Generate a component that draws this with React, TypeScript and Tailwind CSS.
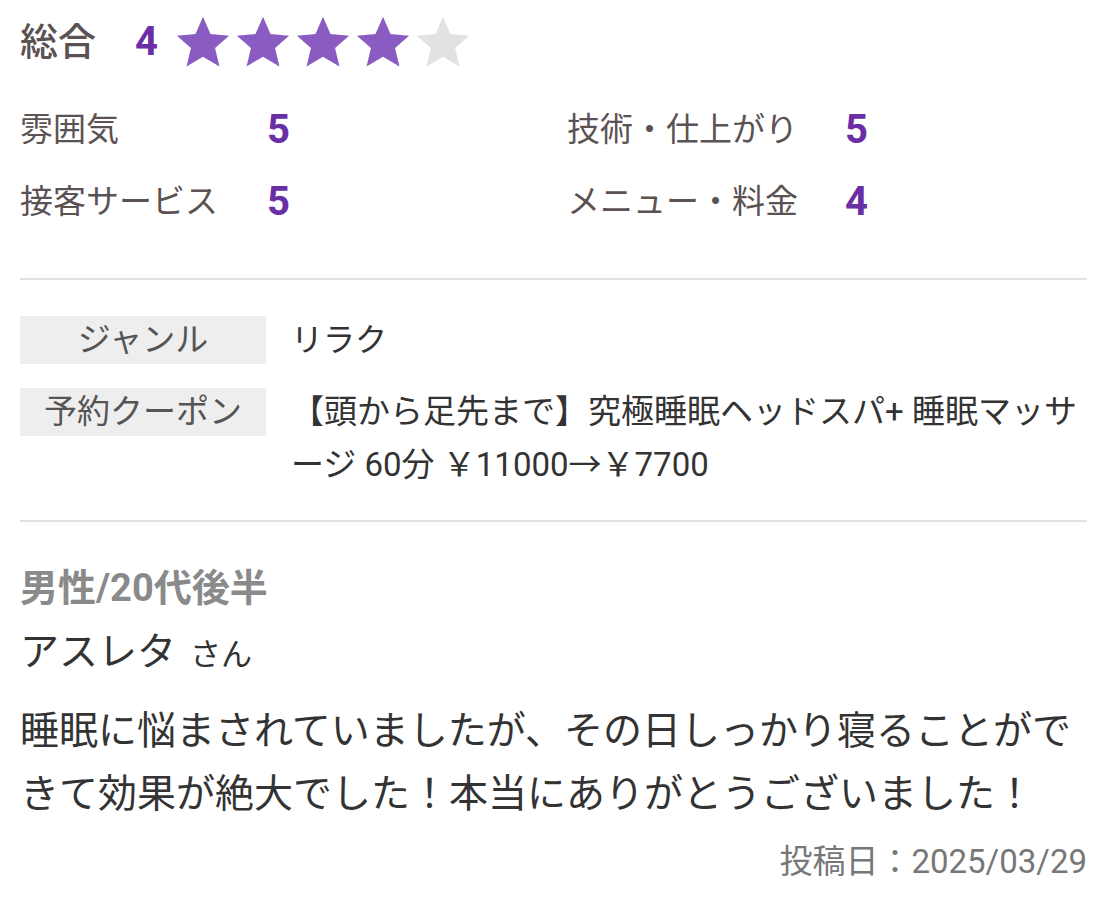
// Salon review card

const FONT = "font-['Roboto','Noto_Sans_CJK_JP',sans-serif]";

function Star({ filled }: { filled: boolean }) {
  return (
    <svg viewBox="0 0 24 24" className="h-[58px] w-[58px]" aria-hidden>
      <path
        d="M12 1.6l3.1 7.1 7.7.7-5.8 5.1 1.8 7.6L12 18.1l-6.8 4 1.8-7.6-5.8-5.1 7.7-.7z"
        fill={filled ? '#8a5cc2' : '#e2e2e4'}
      />
    </svg>
  );
}

function Score({ label, value, labelWidth }: { label: string; value: number; labelWidth: string }) {
  return (
    <div className="flex h-[72px] items-center">
      <div className={`${labelWidth} text-[33px] text-[#5b5253]`}>{label}</div>
      <div className="text-[40px] font-bold text-[#6a2fa6]">{value}</div>
    </div>
  );
}

export default function App() {
  const total = 4;
  return (
    <div className={`${FONT} w-[1119px] bg-white pl-[20px] pr-[32px] pt-[10px] pb-[20px]`}>
      {/* overall */}
      <div className="flex h-[64px] items-center">
        <span className="w-[115px] text-[38px] font-medium text-[#5b5253]">総合</span>
        <span className="mr-[16px] text-[40px] font-bold text-[#6a2fa6]">{total}</span>
        <div className="flex gap-[2px]">
          {[1, 2, 3, 4, 5].map((i) => (
            <Star key={i} filled={i <= total} />
          ))}
        </div>
      </div>

      {/* category scores */}
      <div className="mt-[20px] grid grid-cols-[547px_1fr]">
        <Score label="雰囲気" value={5} labelWidth="w-[247px]" />
        <Score label="技術・仕上がり" value={5} labelWidth="w-[278px]" />
        <Score label="接客サービス" value={5} labelWidth="w-[247px]" />
        <Score label="メニュー・料金" value={4} labelWidth="w-[278px]" />
      </div>

      <div className="mt-[40px] h-[2px] bg-[#e3e3e3]" />

      {/* details */}
      <div className="mt-[36px] flex flex-col gap-[24px]">
        <div className="flex items-start">
          <div className="flex h-[48px] w-[246px] shrink-0 items-center justify-center bg-[#eeeeee] text-[33px] text-[#555]">
            ジャンル
          </div>
          <div className="ml-[25px] text-[32px] leading-[48px] text-[#333]">リラク</div>
        </div>
        <div className="flex items-start">
          <div className="flex h-[48px] w-[246px] shrink-0 items-center justify-center bg-[#eeeeee] text-[33px] text-[#555]">
            予約クーポン
          </div>
          <div className="-mt-[3px] ml-[25px] text-[33px] leading-[53px] text-[#333]">
            【頭から足先まで】究極睡眠ヘッドスパ+ 睡眠マッサージ 60分 ￥11000→￥7700
          </div>
        </div>
      </div>

      <div className="mt-[29px] h-[2px] bg-[#e3e3e3]" />

      {/* review */}
      <div className="mt-[41px] text-[38px] font-bold leading-[50px] text-[#8a8a8a]">男性/20代後半</div>
      <div className="mt-[14px] leading-[50px] text-[#333]">
        <span className="text-[39px]">アスレタ</span>
        <span className="ml-[14px] text-[31px]">さん</span>
      </div>
      <p className="mt-[15px] text-[39px] leading-[63px] text-[#333]">
        睡眠に悩まされていましたが、その日しっかり寝ることができて効果が絶大でした！本当にありがとうございました！
      </p>
      <div className="mt-[16px] text-right text-[33px] leading-[40px] text-[#777]">投稿日：2025/03/29</div>
    </div>
  );
}
